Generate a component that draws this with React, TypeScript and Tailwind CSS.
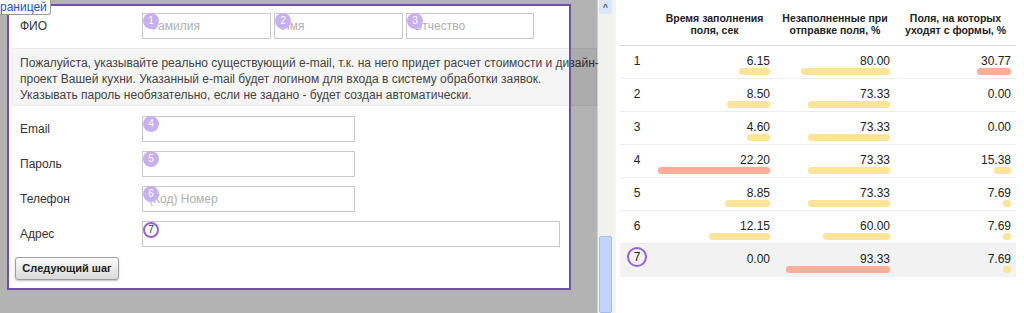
import React from "react";

type Row = { n: number; a: number; b: number; c: number };

const rows: Row[] = [
  { n: 1, a: 6.15, b: 80.0, c: 30.77 },
  { n: 2, a: 8.5, b: 73.33, c: 0 },
  { n: 3, a: 4.6, b: 73.33, c: 0 },
  { n: 4, a: 22.2, b: 73.33, c: 15.38 },
  { n: 5, a: 8.85, b: 73.33, c: 7.69 },
  { n: 6, a: 12.15, b: 60.0, c: 7.69 },
  { n: 7, a: 0, b: 93.33, c: 7.69 },
];

const maxA = 22.2;
const maxB = 93.33;
const maxC = 30.77;

function Badge({ n }: { n: number }) {
  return (
    <span className="absolute left-[1px] top-0 flex h-[16px] w-[16px] items-center justify-center rounded-full bg-[#c6b0ee] text-[10px] leading-none text-white">
      {n}
    </span>
  );
}

function Field({ n, w, placeholder }: { n: number; w: string; placeholder?: string }) {
  return (
    <div className={`relative h-[26px] ${w}`}>
      <input
        className="h-full w-full border border-[#c9c9c9] bg-white pl-[6px] text-[12px] text-[#333] outline-none placeholder:text-[#b0b0b0]"
        placeholder={placeholder}
        readOnly
      />
      {n === 7 ? (
        <span className="absolute left-[1px] top-[1px] flex h-[16px] w-[16px] items-center justify-center rounded-full border-2 border-[#9362de] bg-white text-[10px] leading-none text-[#333]">
          7
        </span>
      ) : (
        <Badge n={n} />
      )}
    </div>
  );
}

function Cell({ v, max, w }: { v: number; max: number; w: number }) {
  const width = v > 0 ? Math.round((v / max) * w) : 0;
  return (
    <div className="flex flex-col items-end pr-[5px] pt-[9px]">
      <span className="leading-[13px]">{v.toFixed(2)}</span>
      {width > 0 && (
        <div
          className={v === max ? "h-[7px] rounded-[3px] bg-[#fcae9a]" : "h-[7px] rounded-[3px] bg-[#fee49b]"}
          style={{ width }}
        />
      )}
    </div>
  );
}

export default function App() {
  return (
    <div className="flex h-[313px] w-[1024px] overflow-hidden bg-white font-['Liberation_Sans',Arial,sans-serif]">
      {/* dimmed page with highlighted form */}
      <div className="relative h-full w-[597px] shrink-0 bg-[#b3b3b3]">
        <div className="absolute left-0 top-0 z-10 h-[15px] rounded-br-[3px] border-b border-r border-[#9a9a9a] bg-white pr-[3px] text-[12px] leading-[14px] text-[#1c4fd8]">
          раницей
        </div>

        <div className="relative ml-[7px] mt-[4px] h-[286px] w-[564px] border-2 border-[#6d50b4] bg-white text-[12px] text-[#333]">
          <div className="flex items-center pl-[11px] pt-[7px]">
            <span className="w-[122px]">ФИО</span>
            <div className="flex gap-[3px]">
              <Field n={1} w="w-[129px]" placeholder="Фамилия" />
              <Field n={2} w="w-[129px]" placeholder="Имя" />
              <Field n={3} w="w-[128px]" placeholder="Отчество" />
            </div>
          </div>

          <div className="ml-[3px] mt-[9px] h-[58px] w-[585px] whitespace-nowrap border border-[#ececec] bg-[#f5f5f5] pl-[7px] pt-[6px] leading-[16px] text-[#444]">
            Пожалуйста, указывайте реально существующий e-mail, т.к. на него придет расчет стоимости и дизайн-
            <br />
            проект Вашей кухни. Указанный e-mail будет логином для входа в систему обработки заявок.
            <br />
            Указывать пароль необязательно, если не задано - будет создан автоматически.
          </div>
          <div className="absolute left-[560px] top-[42px] h-[58px] w-[28px] border-l-2 border-[#6d50b4] bg-black/30" />

          <div className="mt-[10px] flex items-center pl-[11px]">
            <span className="w-[122px]">Email</span>
            <Field n={4} w="w-[213px]" />
          </div>
          <div className="mt-[9px] flex items-center pl-[11px]">
            <span className="w-[122px]">Пароль</span>
            <Field n={5} w="w-[213px]" />
          </div>
          <div className="mt-[9px] flex items-center pl-[11px]">
            <span className="w-[122px]">Телефон</span>
            <Field n={6} w="w-[213px]" placeholder="(Код) Номер" />
          </div>
          <div className="mt-[9px] flex items-center pl-[11px]">
            <span className="w-[122px]">Адрес</span>
            <Field n={7} w="w-[418px]" />
          </div>

          <button className="ml-[6px] mt-[10px] h-[23px] w-[104px] rounded-[3px] border border-[#9d9d9d] bg-gradient-to-b from-[#fbfbfb] to-[#dadada] text-[11px] font-bold text-[#222] shadow-[0_1px_2px_rgba(0,0,0,0.25)]">
            Следующий шаг
          </button>
        </div>
      </div>

      {/* scrollbar */}
      <div className="flex h-full w-[16px] shrink-0 flex-col justify-between border-l border-[#d0d0d0] bg-[#f1f1ed] px-[1px]">
        <div className="flex h-[14px] items-center justify-center rounded-[2px] bg-[#dde6f6] text-[9px] font-bold leading-none text-[#3a5aa8]">
          ^
        </div>
        <div className="h-[77px] rounded-[2px] border border-[#a4bcea] bg-[#c3d4fb]" />
      </div>

      {/* stats table */}
      <div className="flex-1 border-l-[3px] border-[#f4f4f4] pl-[4px] text-[12px] text-[#222]">
        <div className="grid h-[46px] w-[396px] grid-cols-[34px_121px_120px_121px] border-b border-[#d8d8d8] pt-[12px] text-center text-[10.5px] font-bold leading-[12px]">
          <div />
          <div>
            Время заполнения
            <br />
            поля, сек
          </div>
          <div>
            Незаполненные при
            <br />
            отправке поля, %
          </div>
          <div>
            Поля, на которых
            <br />
            уходят с формы, %
          </div>
        </div>
        {rows.map((r) => (
          <div
            key={r.n}
            className={
              r.n === 7
                ? "grid h-[33px] w-[396px] grid-cols-[34px_121px_120px_121px] bg-[#f2f2f2]"
                : "grid h-[33px] w-[396px] grid-cols-[34px_121px_120px_121px] border-b border-[#ececec]"
            }
          >
            {r.n === 7 ? (
              <div className="flex justify-center pt-[3px]">
                <span className="flex h-[20px] w-[20px] items-center justify-center rounded-full border-2 border-[#9362de] leading-none">
                  7
                </span>
              </div>
            ) : (
              <div className="pt-[9px] text-center leading-[13px]">{r.n}</div>
            )}
            <Cell v={r.a} max={maxA} w={112} />
            <Cell v={r.b} max={maxB} w={104} />
            <Cell v={r.c} max={maxC} w={34} />
          </div>
        ))}
      </div>
    </div>
  );
}
